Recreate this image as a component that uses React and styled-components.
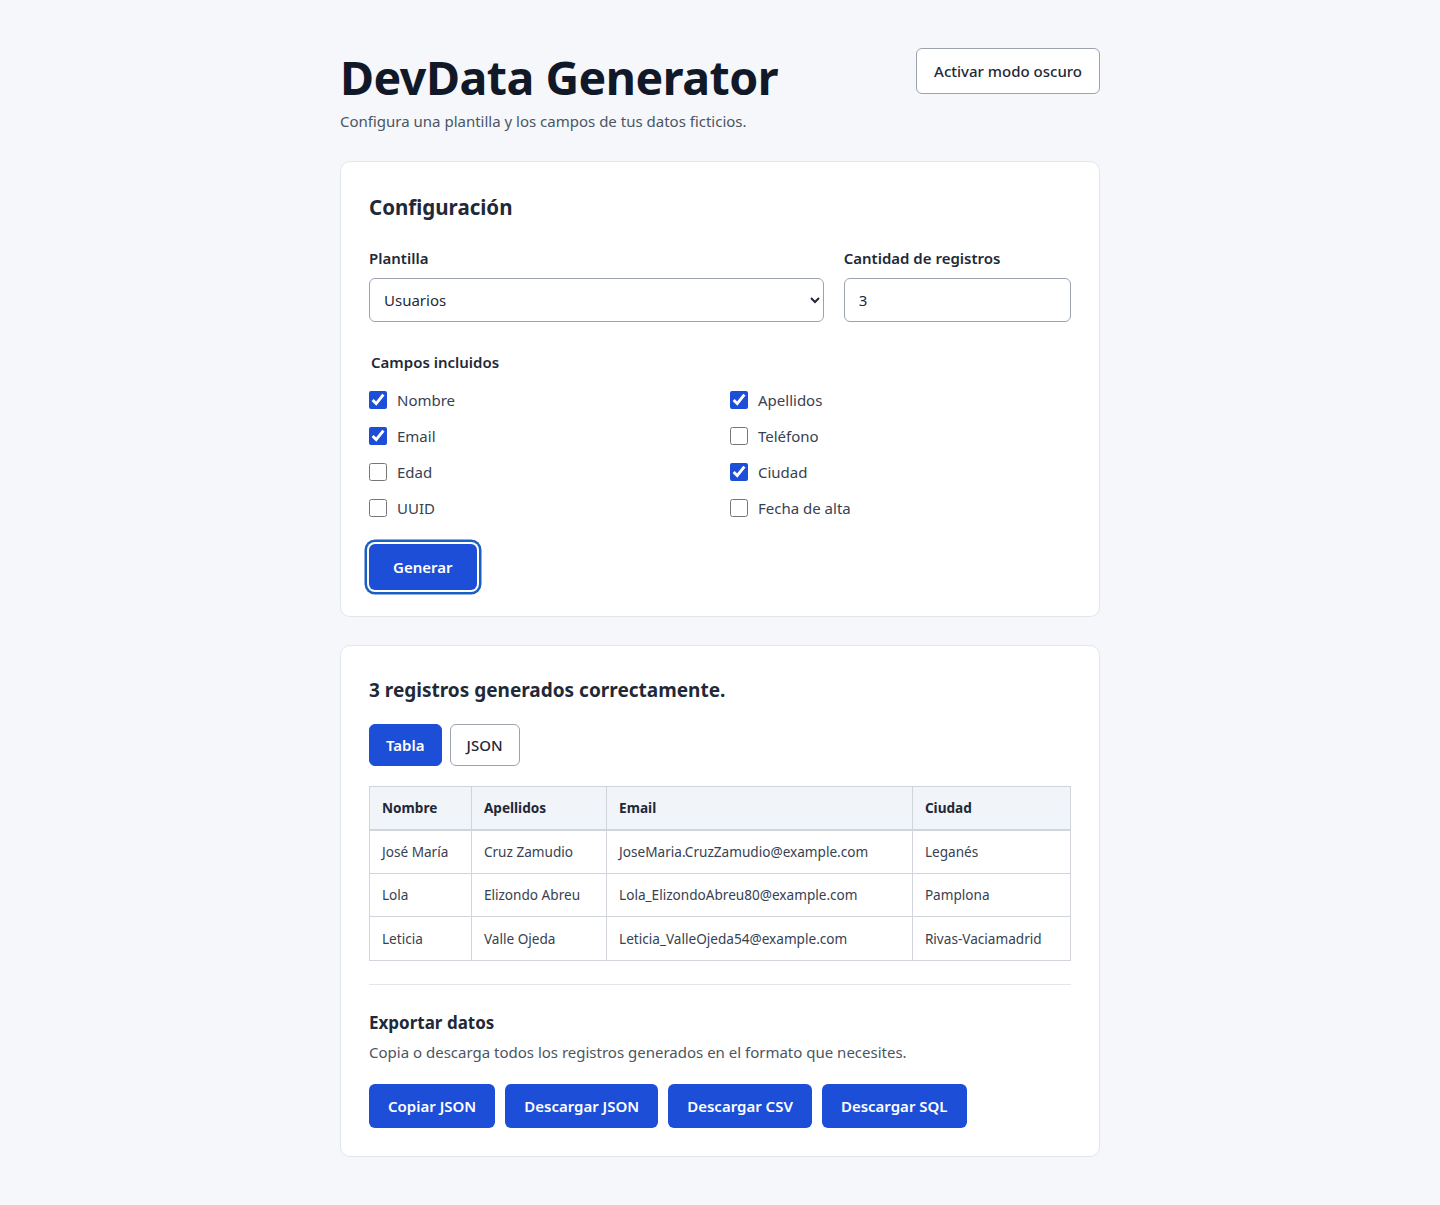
import React, { useState } from 'react'
import styled, { createGlobalStyle } from 'styled-components'

const GlobalStyle = createGlobalStyle`
  * { box-sizing: border-box; }
  body {
    margin: 0;
    background: #f5f7fa;
    color: #1f2937;
    font-family: 'Noto Sans', 'Open Sans', Arial, sans-serif;
  }
`

const Page = styled.main`
  max-width: 760px;
  margin: 0 auto;
  padding: 48px 0 48px;
`

const Header = styled.header`
  display: flex;
  justify-content: space-between;
  align-items: flex-start;
  margin-bottom: 30px;
`

const Title = styled.h1`
  margin: 0;
  font-size: 46.5px;
  line-height: 58px;
  font-weight: 700;
  color: #111827;
  letter-spacing: -0.5px;
`

const Subtitle = styled.p`
  margin: 5px 0 0;
  font-size: 15px;
  color: #4b5563;
`

const ThemeButton = styled.button`
  font-family: inherit;
  font-size: 15px;
  font-weight: 500;
  color: #1f2937;
  background: #fff;
  border: 1px solid #9ca3af;
  border-radius: 6px;
  height: 46px;
  padding: 0 17px;
  cursor: pointer;
`

const Card = styled.section`
  background: #fff;
  border: 1px solid #e2e6ec;
  border-radius: 10px;
  padding: 28px 28px ${({ $compact }) => ($compact ? '26px' : '28px')};
  margin-bottom: 28px;
`

const CardTitle = styled.h2`
  margin: 3px 0 27px;
  font-size: 20.5px;
  font-weight: 700;
  color: #1f2937;
`

const FormGrid = styled.div`
  display: grid;
  grid-template-columns: 2fr 1fr;
  gap: 20px;
`

const Field = styled.label`
  display: flex;
  flex-direction: column;
  gap: 10px;
  font-size: 15px;
  font-weight: 600;
  color: #1f2937;
`

const controlStyles = `
  font-family: inherit;
  font-size: 15px;
  font-weight: 400;
  color: #1f2937;
  height: 44px;
  border: 1px solid #9ca3af;
  border-radius: 6px;
  background: #fff;
  padding: 0 14px;
  width: 100%;
`

const Select = styled.select`
  ${controlStyles}
  padding-left: 10px;
`

const Input = styled.input`
  ${controlStyles}
`

const Fieldset = styled.fieldset`
  border: 0;
  margin: 30px 0 0;
  padding: 0;
`

const Legend = styled.legend`
  padding: 0 2px;
  font-size: 15px;
  font-weight: 600;
  color: #1f2937;
  margin-bottom: 16px;
`

const CheckGrid = styled.div`
  display: grid;
  grid-template-columns: 1fr 1fr;
  column-gap: 20px;
  row-gap: 12px;
`

const CheckItem = styled.label`
  display: flex;
  align-items: center;
  gap: 10px;
  font-size: 15px;
  color: #374151;
  height: 24px;

  input {
    width: 18px;
    height: 18px;
    margin: 0;
    accent-color: #1d4ed8;
  }
`

const PrimaryButton = styled.button`
  font-family: inherit;
  font-size: 15px;
  font-weight: 600;
  color: #fff;
  background: #1d4ed8;
  border: 0;
  border-radius: 6px;
  height: 44px;
  padding: 0 19px;
  cursor: pointer;
`

const GenerateButton = styled(PrimaryButton)`
  height: 46px;
  padding: 0 24px;
  box-shadow: 0 0 0 2px #fff, 0 0 0 4.5px #1a5fc2;
`

const Actions = styled.div`
  margin-top: 24px;
`

const ResultTitle = styled.h2`
  margin: 3px 0 21px;
  font-size: 19px;
  font-weight: 700;
  color: #1f2937;
`

const Tabs = styled.div`
  display: flex;
  gap: 8px;
  margin-bottom: 20px;
`

const Tab = styled.button`
  font-family: inherit;
  font-size: 15px;
  font-weight: ${({ $active }) => ($active ? 600 : 500)};
  height: 42px;
  padding: 0 16px;
  border-radius: 6px;
  cursor: pointer;
  color: ${({ $active }) => ($active ? '#fff' : '#1f2937')};
  background: ${({ $active }) => ($active ? '#1d4ed8' : '#fff')};
  border: 1px solid ${({ $active }) => ($active ? '#1d4ed8' : '#9ca3af')};
`

const Table = styled.table`
  width: 100%;
  border-collapse: collapse;
  font-size: 13.6px;

  th,
  td {
    border: 1px solid #d1d5db;
    padding: 0 12px;
    text-align: left;
    height: 43.5px;
    color: #1f2937;
  }

  th {
    background: #f1f4f8;
    font-weight: 700;
    height: 43px;
    border-bottom: 2px solid #cfd5dd;
  }

  td {
    color: #374151;
  }
`

const Divider = styled.hr`
  border: 0;
  border-top: 1px solid #e2e6ec;
  margin: 23px 0 26px;
`

const ExportTitle = styled.h3`
  margin: 0 0 8px;
  font-size: 17px;
  font-weight: 700;
  color: #1f2937;
`

const ExportText = styled.p`
  margin: 0 0 22px;
  font-size: 15px;
  color: #4b5563;
`

const ButtonRow = styled.div`
  display: flex;
  gap: 10px;
`

const fields = [
  ['Nombre', true],
  ['Apellidos', true],
  ['Email', true],
  ['Teléfono', false],
  ['Edad', false],
  ['Ciudad', true],
  ['UUID', false],
  ['Fecha de alta', false],
]

const rows = [
  ['José María', 'Cruz Zamudio', 'JoseMaria.CruzZamudio@example.com', 'Leganés'],
  ['Lola', 'Elizondo Abreu', 'Lola_ElizondoAbreu80@example.com', 'Pamplona'],
  ['Leticia', 'Valle Ojeda', 'Leticia_ValleOjeda54@example.com', 'Rivas-Vaciamadrid'],
]

const App = () => {
  const [checked, setChecked] = useState(() => fields.map(([, on]) => on))
  const [view, setView] = useState('tabla')

  return (
    <>
      <GlobalStyle />
      <Page>
        <Header>
          <div>
            <Title>DevData Generator</Title>
            <Subtitle>Configura una plantilla y los campos de tus datos ficticios.</Subtitle>
          </div>
          <ThemeButton>Activar modo oscuro</ThemeButton>
        </Header>

        <Card $compact>
          <CardTitle>Configuración</CardTitle>
          <FormGrid>
            <Field>
              Plantilla
              <Select defaultValue='usuarios'>
                <option value='usuarios'>Usuarios</option>
                <option value='productos'>Productos</option>
              </Select>
            </Field>
            <Field>
              Cantidad de registros
              <Input type='text' defaultValue='3' />
            </Field>
          </FormGrid>

          <Fieldset>
            <Legend>Campos incluidos</Legend>
            <CheckGrid>
              {fields.map(([name], i) => (
                <CheckItem key={name}>
                  <input
                    type='checkbox'
                    checked={checked[i]}
                    onChange={() =>
                      setChecked(c => c.map((v, j) => (j === i ? !v : v)))
                    }
                  />
                  {name}
                </CheckItem>
              ))}
            </CheckGrid>
          </Fieldset>

          <Actions>
            <GenerateButton>Generar</GenerateButton>
          </Actions>
        </Card>

        <Card>
          <ResultTitle>3 registros generados correctamente.</ResultTitle>
          <Tabs>
            <Tab $active={view === 'tabla'} onClick={() => setView('tabla')}>Tabla</Tab>
            <Tab $active={view === 'json'} onClick={() => setView('json')}>JSON</Tab>
          </Tabs>

          <Table>
            <thead>
              <tr>
                <th>Nombre</th>
                <th>Apellidos</th>
                <th>Email</th>
                <th>Ciudad</th>
              </tr>
            </thead>
            <tbody>
              {rows.map(r => (
                <tr key={r[2]}>
                  {r.map(cell => (
                    <td key={cell}>{cell}</td>
                  ))}
                </tr>
              ))}
            </tbody>
          </Table>

          <Divider />

          <ExportTitle>Exportar datos</ExportTitle>
          <ExportText>Copia o descarga todos los registros generados en el formato que necesites.</ExportText>
          <ButtonRow>
            <PrimaryButton>Copiar JSON</PrimaryButton>
            <PrimaryButton>Descargar JSON</PrimaryButton>
            <PrimaryButton>Descargar CSV</PrimaryButton>
            <PrimaryButton>Descargar SQL</PrimaryButton>
          </ButtonRow>
        </Card>
      </Page>
    </>
  )
}

export default App
